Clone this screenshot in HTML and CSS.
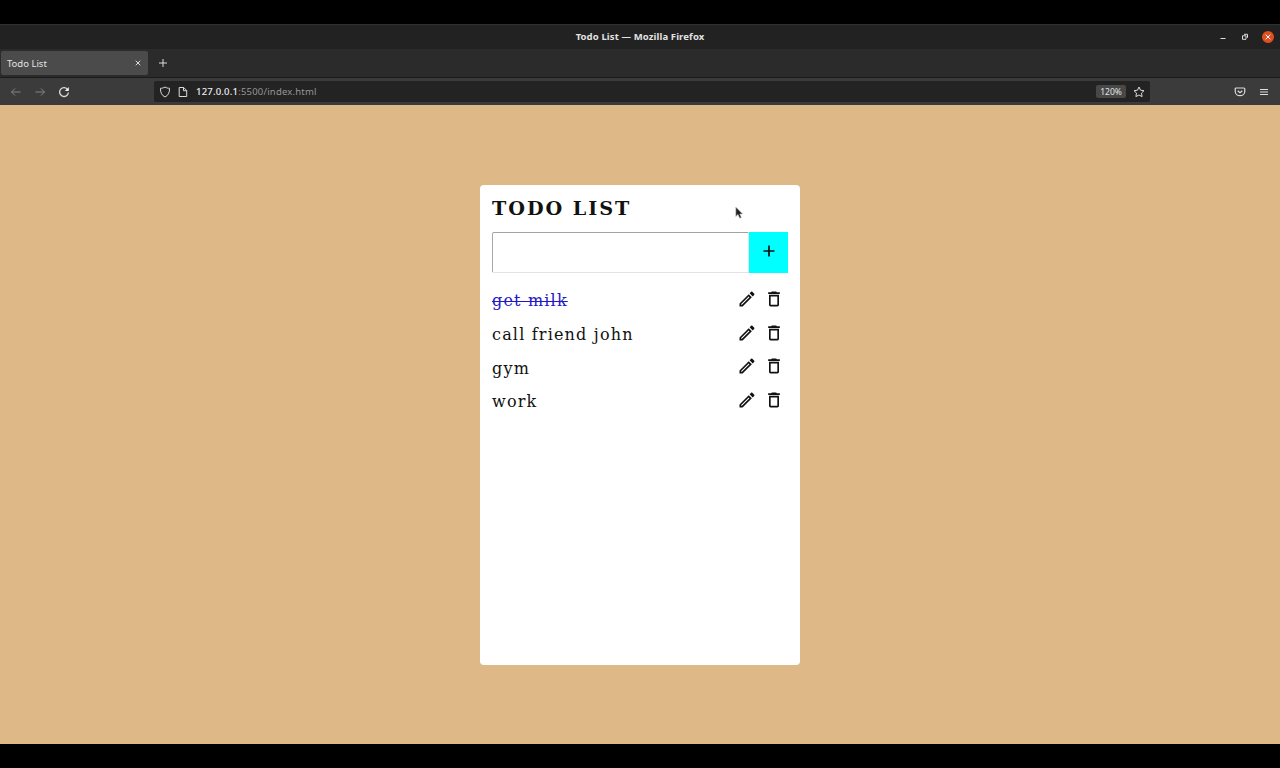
FILE: index.html
```
<!DOCTYPE html>
<html lang="en">
<head>
<meta charset="utf-8">
<title>Todo List</title>
<link rel="stylesheet" href="styles.css">
</head>
<body>
<svg class="defs" aria-hidden="true">
  <symbol id="edit" viewBox="0 0 24 24"><path d="M14.06 9.02l.92.92L5.92 19H5v-.92l9.06-9.06M17.66 3c-.25 0-.51.1-.7.29l-1.83 1.83 3.75 3.75 1.83-1.83c.39-.39.39-1.02 0-1.41l-2.34-2.34c-.2-.2-.45-.29-.71-.29zm-3.6 3.19L3 17.25V21h3.75L17.81 9.94l-3.75-3.75z"/></symbol>
  <symbol id="trash" viewBox="0 0 24 24"><path d="M16 9v10H8V9h8m-1.5-6h-5l-1 1H5v2h14V4h-3.5l-1-1zM18 7H6v12c0 1.1.9 2 2 2h8c1.1 0 2-.9 2-2V7z"/></symbol>
</svg>
<div class="window">
  <header class="titlebar">
    <span class="window-title">Todo List — Mozilla Firefox</span>
    <div class="window-controls">
      <svg width="8" height="12" viewBox="0 0 8 12" class="line"><path d="M1.500 7.500h5"/></svg>
      <svg width="8" height="12" viewBox="0 0 8 12" class="line"><path d="M1.500 4.800h3.500v3.500h-3.500zM3 3.300h3.500v3.500"/></svg>
      <svg width="12" height="12" viewBox="0 0 12 12"><circle cx="6" cy="6" r="6" fill="#e0501f"/><path d="M3.700 3.700l4.600 4.600M8.300 3.700l-4.600 4.600" stroke="#fff" stroke-width="1"/></svg>
    </div>
  </header>
  <div class="tabs">
    <div class="tab"><span>Todo List</span><svg width="6" height="6" viewBox="0 0 6 6" class="line"><path d="M.7.7l4.600 4.600M5.300.7L.7 5.300"/></svg></div>
    <svg width="8" height="8" viewBox="0 0 8 8" class="line new-tab"><path d="M4 0v8M0 4h8"/></svg>
  </div>
  <nav class="toolbar">
    <div class="nav-buttons">
      <svg width="12" height="12" viewBox="0 0 12 12" class="line dim"><path d="M10.500 6h-9M5 2.500L1.500 6 5 9.500"/></svg>
      <svg width="12" height="12" viewBox="0 0 12 12" class="line dim"><path d="M1.500 6h9M7 2.500L10.500 6 7 9.500"/></svg>
      <svg width="12" height="12" viewBox="0 0 12 12" class="line"><path d="M9.800 3.800A4.400 4.400 0 1 0 10.400 6.500" stroke-width="1.300"/><path d="M10.800 1v4H6.800z" fill="#f0f0f0" stroke="none"/></svg>
    </div>
    <div class="address">
      <svg width="12" height="12" viewBox="0 0 12 12" class="line"><path d="M6 1C4.600 2 3 2.200 1.500 2.300 1.300 6.500 2.800 9.500 6 11c3.200-1.500 4.700-4.500 4.500-8.700C9 2.200 7.400 2 6 1z"/></svg>
      <svg width="10" height="12" viewBox="0 0 10 12" class="line page-icon"><path d="M1.200 1.500h4.500l3 3v6H1.200zM5.500 1.500v3.200h3.200"/></svg>
      <span class="url"><b>127.0.0.1</b>:5500/index.html</span>
      <span class="zoom">120%</span>
      <svg width="12" height="12" viewBox="0 0 12 12" class="line"><path d="M6 1l1.500 3.200 3.500.5-2.500 2.400.6 3.500L6 9l-3.100 1.600.6-3.500L1 4.700l3.500-.5z" stroke-linejoin="round"/></svg>
    </div>
    <div class="tools">
      <svg width="12" height="12" viewBox="0 0 12 12" class="line"><path d="M2.200 2h7.600q1 0 1 1v2.200c0 6-9.600 6-9.600 0V3q0-1 1-1zM3.700 4.700L6 6.800l2.300-2.100" stroke-width="1.200"/></svg>
      <svg width="8" height="12" viewBox="0 0 8 12" class="line"><path d="M0 3.500h8M0 6h8M0 8.500h8"/></svg>
    </div>
  </nav>
  <main class="page">
    <section class="card">
      <h1>TODO LIST</h1>
      <form class="add"><input type="text" aria-label="New todo"><button type="button" aria-label="Add"><svg width="12" height="12" viewBox="0 0 12 12"><path d="M6 .5v11M.5 6h11" stroke="#111" stroke-width="1.700"/></svg></button></form>
      <ul>
        <li><span class="done">get milk</span><svg class="icon"><use href="#edit"/></svg><svg class="icon"><use href="#trash"/></svg></li>
        <li><span>call friend john</span><svg class="icon"><use href="#edit"/></svg><svg class="icon"><use href="#trash"/></svg></li>
        <li><span>gym</span><svg class="icon"><use href="#edit"/></svg><svg class="icon"><use href="#trash"/></svg></li>
        <li><span>work</span><svg class="icon"><use href="#edit"/></svg><svg class="icon"><use href="#trash"/></svg></li>
      </ul>
    </section>
  </main>
</div>
<svg class="cursor" width="9" height="14" viewBox="0 0 9 14"><path d="M.8 1v9.500l2.200-2 1.700 3.800 1.700-.8L4.800 8h2.900z" fill="#222" stroke="#ccc" stroke-width=".6"/></svg>
</body>
</html>
```
FILE: styles.css
```
* { box-sizing: border-box; }
body { margin: 0; height: 768px; padding: 24px 0; background: #000; overflow: hidden; }
.defs { position: absolute; width: 0; height: 0; }
.window { height: 720px; display: flex; flex-direction: column; font-family: "Noto Sans", "Open Sans", sans-serif; font-size: 9.5px; color: #ddd; }
svg { display: block; flex: none; }
.line { fill: none; stroke: #dcdcdc; stroke-width: 1; }
.dim { stroke: #858585; }

.titlebar { height: 25px; display: grid; grid-template-columns: 1fr auto 1fr; align-items: center; background: #222; border-top: 1px solid #303030; padding-bottom: 1px; }
.window-title { grid-column: 2; font-weight: 700; font-size: 9.5px; letter-spacing: .12px; color: #e2e2e2; padding-bottom: 1px; }
.window-controls { display: flex; justify-content: flex-end; gap: 14px; padding-right: 6px; }
.window-controls svg:last-child { margin-left: -1px; }

.tabs { height: 29px; display: flex; align-items: center; background: #2b2b2b; border-bottom: 1px solid #1b1b1b; padding-left: 1px; }
.tab { width: 147px; height: 24px; display: flex; align-items: center; justify-content: space-between; padding: 0 7px 0 6px; background: #4b4b4b; border-radius: 2px; color: #e4e4e4; }
.new-tab { margin-left: 11px; }

.toolbar { height: 27px; display: flex; align-items: center; background: #3b3b3b; }
.nav-buttons { width: 154px; display: flex; gap: 12px; padding-left: 10px; }
.address { width: 996px; height: 21px; display: flex; align-items: center; padding: 0 5px; background: #232323; border-radius: 2px; }
.page-icon { margin-left: 7px; }
.url { margin-left: 8px; color: #969696; letter-spacing: .2px; flex: 1; }
.url b { font-weight: 500; color: #eee; }
.zoom { width: 30px; height: 13px; line-height: 13px; margin-right: 7px; background: #484848; border-radius: 2px; text-align: center; font-size: 8.5px; color: #e4e4e4; }
.tools { flex: 1; display: flex; justify-content: flex-end; gap: 14px; padding-right: 12px; }

.page { flex: 1; display: flex; align-items: center; justify-content: center; background: #deb887; }
.card { width: 320px; height: 480px; padding: 12px; background: #fff; border-radius: 4px; font-family: "DejaVu Serif", serif; color: #111; }
h1 { margin: 0; height: 24px; line-height: 24px; font-size: 19.2px; letter-spacing: 1.95px; }
.add { height: 41px; display: flex; margin-top: 11px; }
.add input { flex: 1; min-width: 0; border: 1px solid; border-color: #a2a2a2 #e3e3e3 #e3e3e3 #a8a8a8; border-radius: 2px 0 0 2px; background: #fff; }
.add button { width: 39px; padding: 0 0 3px; border: 0; background: #0ff; display: flex; align-items: center; justify-content: center; }
ul { list-style: none; margin: 10.5px 0 0; padding: 0 4px 0 0; }
li { height: 33.7px; display: flex; align-items: center; gap: 7px; font-size: 16px; letter-spacing: 1.18px; }
li span { flex: 1; padding-top: 2px; }
.icon { width: 20px; height: 20px; margin-bottom: 1.5px; fill: #111; }
.done { color: #2517c5; text-decoration: line-through; text-decoration-thickness: 1px; }
.cursor { position: absolute; left: 735px; top: 206px; }
```
